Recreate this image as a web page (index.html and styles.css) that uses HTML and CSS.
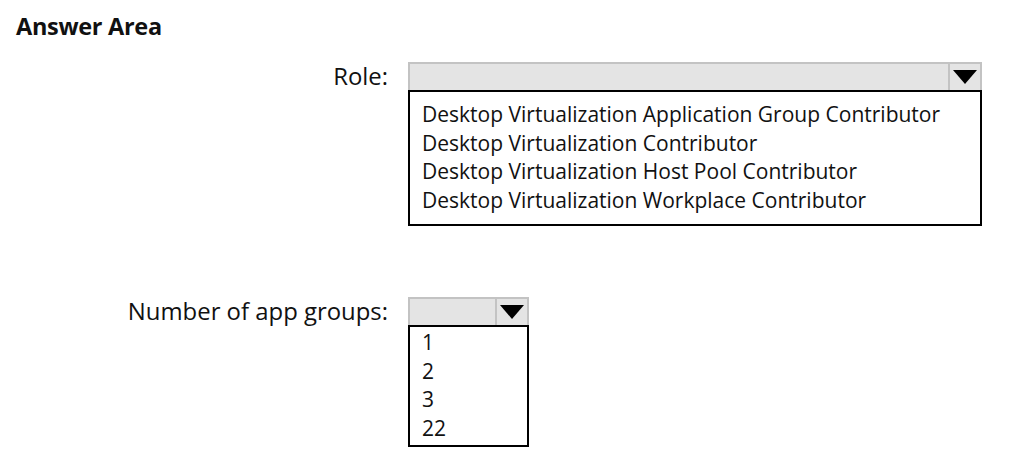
FILE: index.html
```html
<!DOCTYPE html>
<html>
<head>
<meta charset="utf-8">
<link rel="stylesheet" href="styles.css">
</head>
<body>
<div class="page">
  <h1 class="title">Answer Area</h1>
  <div class="row row-role">
    <div class="label">Role:</div>
    <div class="combo combo-role">
      <div class="combo-head">
        <div class="combo-field"></div>
        <div class="combo-btn"><svg width="24" height="14" viewBox="0 0 24 14"><polygon points="0,0 24,0 12,14" fill="#000"/></svg></div>
      </div>
      <ul class="combo-list list-role">
        <li>Desktop Virtualization Application Group Contributor</li>
        <li>Desktop Virtualization Contributor</li>
        <li>Desktop Virtualization Host Pool Contributor</li>
        <li>Desktop Virtualization Workplace Contributor</li>
      </ul>
    </div>
  </div>
  <div class="row row-num">
    <div class="label">Number of app groups:</div>
    <div class="combo combo-num">
      <div class="combo-head">
        <div class="combo-field"></div>
        <div class="combo-btn"><svg width="24" height="14" viewBox="0 0 24 14"><polygon points="0,0 24,0 12,14" fill="#000"/></svg></div>
      </div>
      <ul class="combo-list list-num">
        <li>1</li>
        <li>2</li>
        <li>3</li>
        <li>22</li>
      </ul>
    </div>
  </div>
</div>
</body>
</html>
```
FILE: styles.css
```css
html, body {
  margin: 0;
  padding: 0;
  background: #fff;
}
body {
  font-family: "Open Sans", "Noto Sans", "DejaVu Sans", sans-serif;
  color: #111;
  width: 1009px;
  height: 470px;
  overflow: hidden;
}
.page {
  padding: 11px 0 0 0;
}
.title {
  margin: 0 0 0 16px;
  font-size: 23.5px;
  font-weight: 700;
  line-height: 30px;
  letter-spacing: -0.3px;
}
.row {
  display: grid;
  grid-template-columns: 388px auto;
  column-gap: 20px;
  align-items: start;
}
.row-role {
  margin-top: 21px;
}
.row-num {
  margin-top: 71px;
}
.label {
  text-align: right;
  font-size: 23.9px;
  line-height: 28px;
}
.combo-head {
  display: flex;
  height: 28px;
  box-sizing: border-box;
  border: 2px solid #c3c3c3;
  border-bottom: none;
  background: #e4e4e4;
}
.combo-field {
  flex: 1;
}
.combo-btn {
  width: 30px;
  border-left: 2px solid #c3c3c3;
  display: flex;
  align-items: center;
  justify-content: center;
}
.combo-btn svg {
  display: block;
}
.combo-role {
  width: 574px;
}
.combo-num {
  width: 121px;
}
.combo-list {
  list-style: none;
  margin: 0;
  border: 2px solid #000;
  font-size: 21px;
  line-height: 28.7px;
  color: #111;
}
.list-role {
  padding: 8px 12px 9px 12px;
}
.list-num {
  padding: 1px 12px 2px 12px;
}
```
